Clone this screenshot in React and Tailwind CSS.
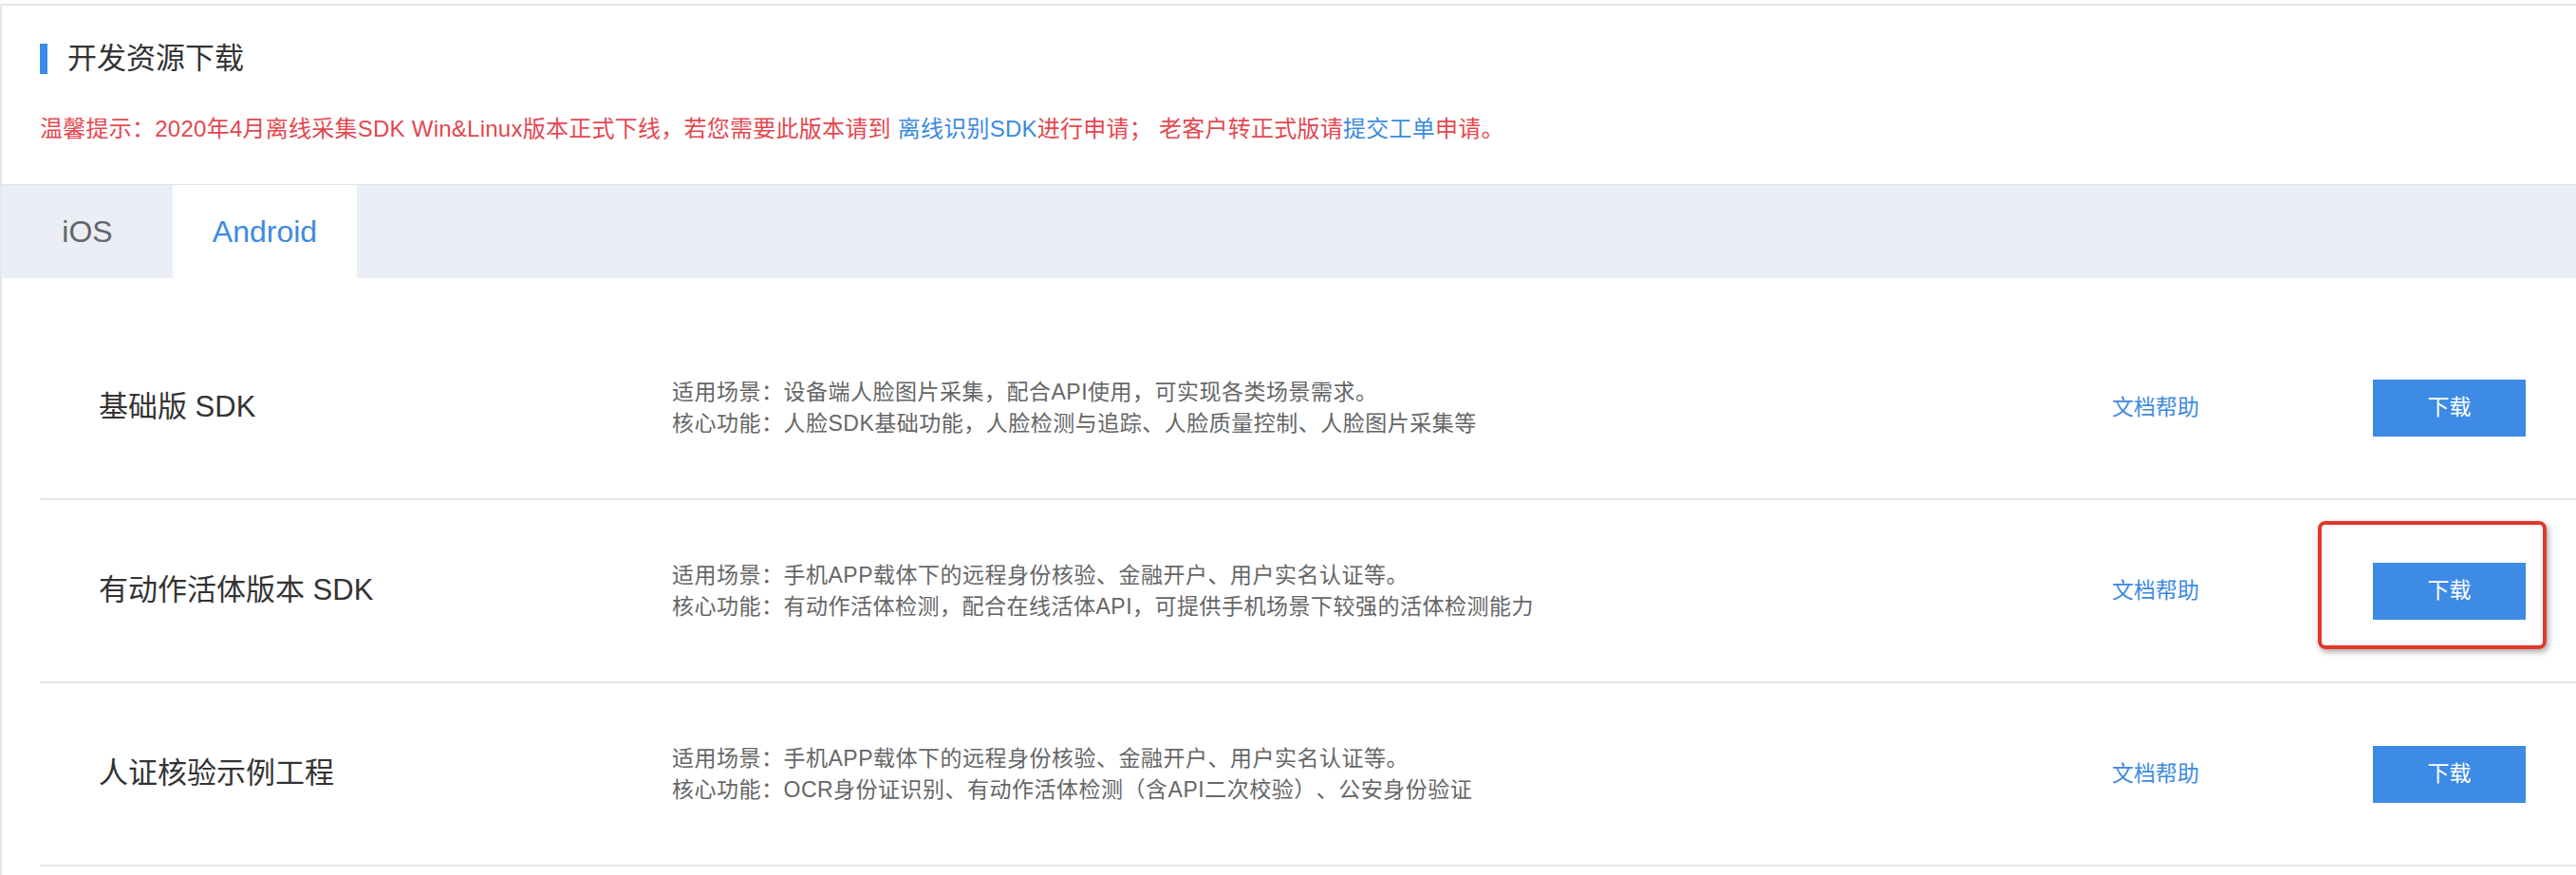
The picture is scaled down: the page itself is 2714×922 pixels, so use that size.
import React from "react";

const rows = [
  {
    name: "基础版 SDK",
    scene: "适用场景：设备端人脸图片采集，配合API使用，可实现各类场景需求。",
    core: "核心功能：人脸SDK基础功能，人脸检测与追踪、人脸质量控制、人脸图片采集等",
  },
  {
    name: "有动作活体版本 SDK",
    scene: "适用场景：手机APP载体下的远程身份核验、金融开户、用户实名认证等。",
    core: "核心功能：有动作活体检测，配合在线活体API，可提供手机场景下较强的活体检测能力",
    marked: true,
  },
  {
    name: "人证核验示例工程",
    scene: "适用场景：手机APP载体下的远程身份核验、金融开户、用户实名认证等。",
    core: "核心功能：OCR身份证识别、有动作活体检测（含API二次校验）、公安身份验证",
  },
];

const font = "font-['Liberation_Sans','Noto_Sans_CJK_SC',sans-serif] [text-spacing-trim:space-all]";

const App = () => {
  return (
    <div className={`w-[2714px] h-[922px] overflow-hidden bg-white pt-[4px] ${font}`}>
      <div className="h-full border-t-2 border-l-2 border-[#e4e6ee]">
        {/* section title */}
        <div className="px-[40px] pt-[40px]">
          <div className="flex items-center h-[32px]">
            <div className="w-[8px] h-[32px] bg-[#3c8be6]"></div>
            <h2 className="ml-[21px] text-[31px] leading-[32px] text-[#333]">开发资源下载</h2>
          </div>
          <p className="mt-[42px] text-[24px] leading-[32px] tracking-[0.25px] text-[#e4474f] whitespace-nowrap">
            温馨提示：2020年4月离线采集SDK Win&amp;Linux版本正式下线，若您需要此版本请到{" "}
            <a className="text-[#3c8ae0]">离线识别SDK</a>进行申请；{" "}
            老客户转正式版请<a className="text-[#3c8ae0]">提交工单</a>申请。
          </p>
        </div>

        {/* tabs */}
        <div className="mt-[42px] flex h-[99px] border-t border-[#e1e3ea] bg-[#ebeef6]">
          <div className="w-[180px] flex items-center justify-center text-[32px] text-[#666]">iOS</div>
          <div className="w-[194px] flex items-center justify-center bg-white text-[32px] text-[#3d8ae0]">
            Android
          </div>
        </div>

        {/* list */}
        <div className="ml-[40px] mt-[41px]">
          {rows.map((row) => (
            <div
              key={row.name}
              className="flex items-center h-[193px] border-b-2 border-[#e4e6ea] pl-[62px] pr-[53px]"
            >
              <div className="w-[604px] text-[31px] text-[#333]">{row.name}</div>
              <div className="flex-1 text-[23px] leading-[33px] tracking-[0.5px] text-[#666] whitespace-nowrap">
                <p>{row.scene}</p>
                <p>{row.core}</p>
              </div>
              <a className="w-[275px] text-[23px] text-[#3c8ae0]">文档帮助</a>
              <div className="relative">
                <button className="w-[161px] h-[60px] bg-[#3d8be5] text-white text-[23px]">下载</button>
                {row.marked && (
                  <div className="absolute -left-[58px] -right-[22px] -top-[44px] -bottom-[31px] rounded-[8px] border-[4px] border-[#e2372b] shadow-[2px_3px_6px_rgba(0,0,0,0.35)]"></div>
                )}
              </div>
            </div>
          ))}
        </div>
      </div>
    </div>
  );
};

export default App;
